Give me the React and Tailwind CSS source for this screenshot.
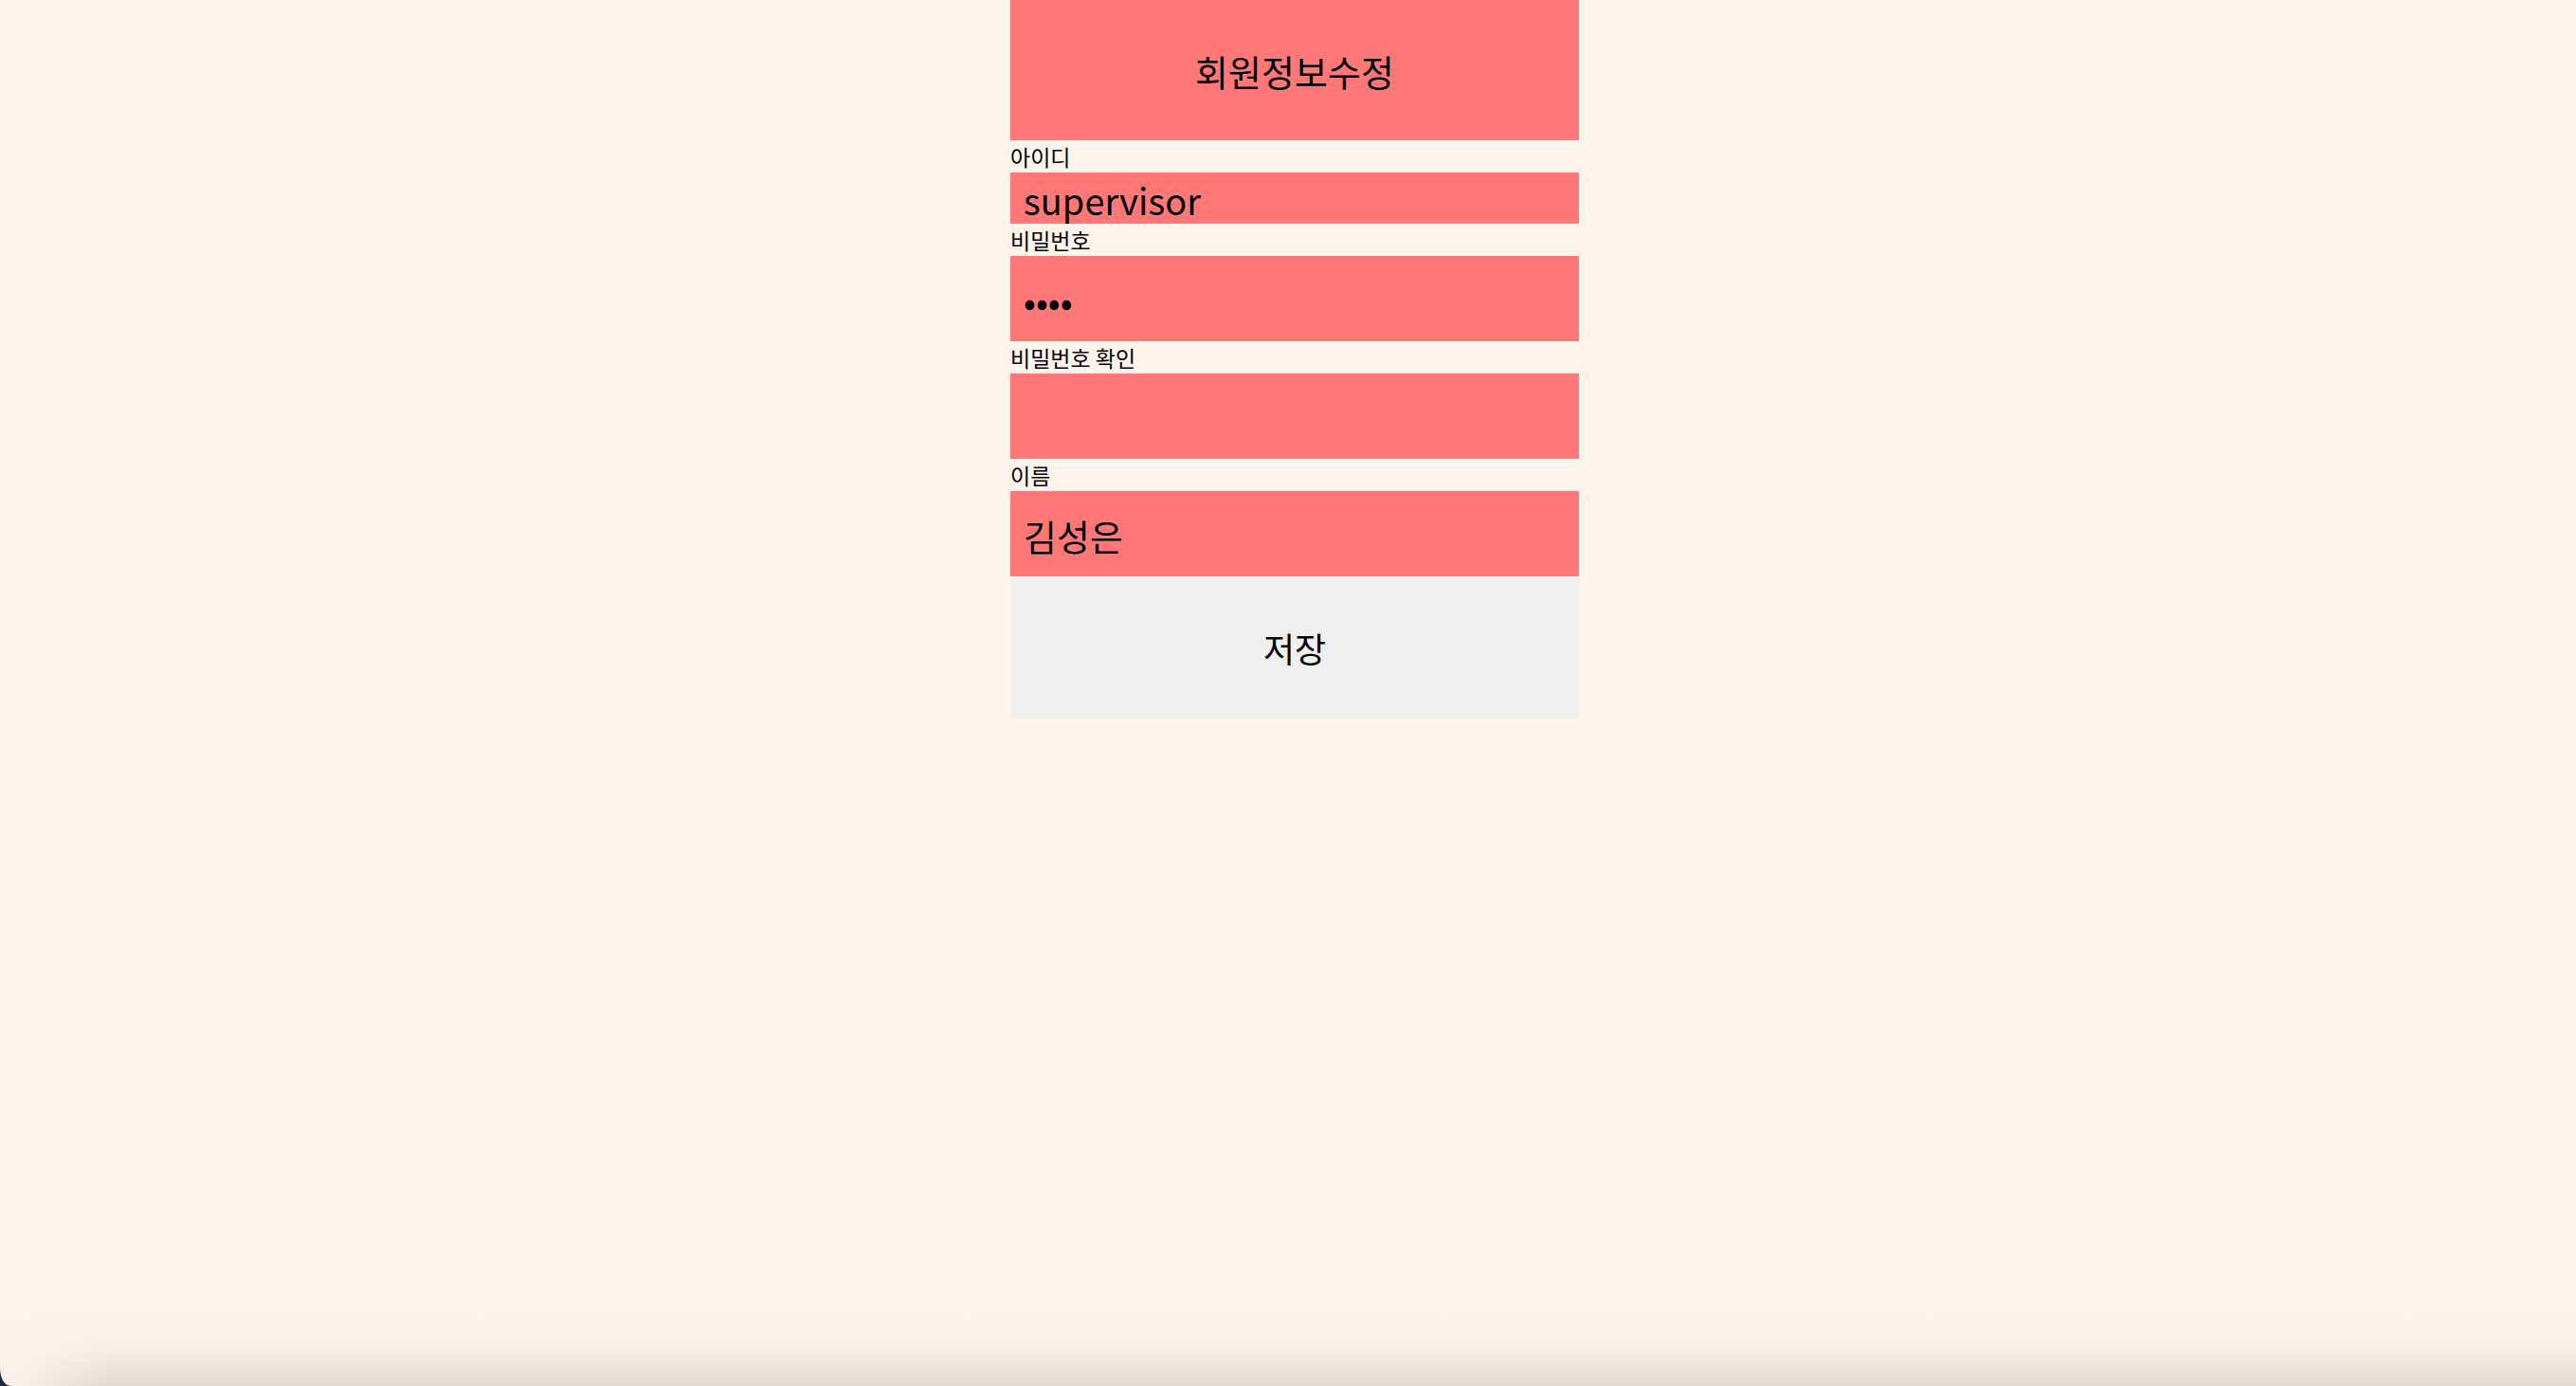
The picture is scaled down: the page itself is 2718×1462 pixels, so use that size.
import React from "react";

const font = { fontFamily: '"Noto Sans CJK KR", "Noto Sans", sans-serif' };

const Field = ({ label, children }) => (
  <>
    <label className="block text-[23px] leading-[34px] text-black">{label}</label>
    {children}
  </>
);

const inputCls =
  "block w-full bg-[#ff7878] border-0 outline-none pl-[14px] text-black";

export default function App() {
  return (
    <div
      className="relative h-[1462px] w-full overflow-hidden bg-[#fef4ec] pl-[14px]"
      style={font}
    >
      <div className="mx-auto w-[600px] flex flex-col">
        <div className="h-[148px] bg-[#ff7878] flex items-center justify-center text-[38px] text-black">
          회원정보수정
        </div>

        <Field label="아이디">
          <input
            readOnly
            value="supervisor"
            className={`${inputCls} h-[54px] leading-[54px] pt-[4px] text-[38px]`}
            style={font}
          />
        </Field>

        <Field label="비밀번호">
          <input
            readOnly
            type="password"
            value="1234"
            className={`${inputCls} h-[90px] text-[38px] pt-[3px]`}
            style={font}
          />
        </Field>

        <Field label="비밀번호 확인">
          <input readOnly type="password" value="" className={`${inputCls} h-[90px] text-[38px]`} style={font} />
        </Field>

        <Field label="이름">
          <input
            readOnly
            value="김성은"
            className={`${inputCls} h-[90px] pt-[2px] text-[38px]`}
            style={font}
          />
        </Field>

        <button
          type="button"
          className="h-[150px] w-full bg-[#efefef] text-[36px] text-black flex items-center justify-center"
          style={font}
        >
          저장
        </button>
      </div>

      {/* window bottom shadow */}
      <div className="pointer-events-none absolute bottom-0 left-0 right-0 h-[72px] bg-gradient-to-b from-transparent via-[#f6ece4] to-[#e3d9d1]" />
      <div className="pointer-events-none absolute bottom-0 left-0 h-[72px] w-[120px] bg-gradient-to-r from-[#fef4ec] to-transparent" />
      <svg className="pointer-events-none absolute bottom-0 left-0" width="12" height="20" viewBox="0 0 12 20">
        <path d="M0 0 C0 11 4 20 12 20 L0 20 Z" fill="#1c2a45" />
      </svg>
    </div>
  );
}
